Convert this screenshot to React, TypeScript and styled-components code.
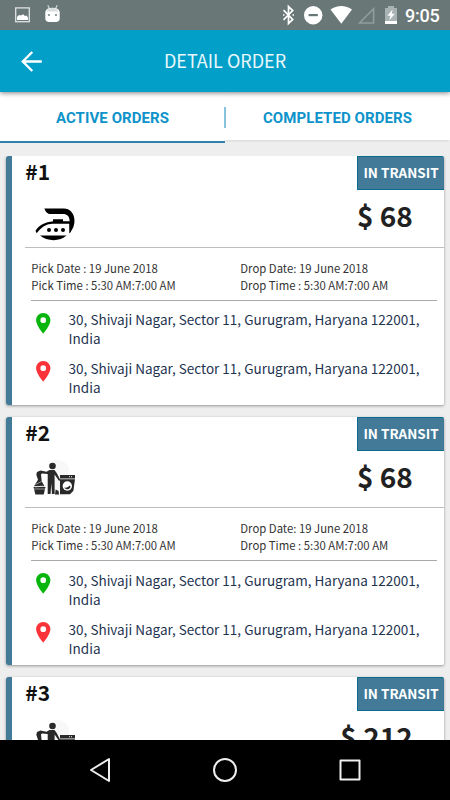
import React from "react";
import styled, { createGlobalStyle } from "styled-components";

const Global = createGlobalStyle`
  * { box-sizing: border-box; }
  body { margin: 0; background: #eeeeee; }
`;

const Screen = styled.div`
  width: 450px;
  height: 800px;
  display: flex;
  flex-direction: column;
  overflow: hidden;
  background: #eeeeee;
  color: #212121;
  font-family: "Noto Sans CJK SC", "Noto Sans", sans-serif;
`;

const StatusBar = styled.div`
  height: 30px;
  flex: none;
  display: flex;
  justify-content: space-between;
  background: #697777;
`;

const Toolbar = styled.header`
  height: 62px;
  flex: none;
  display: grid;
  grid-template-columns: 63px 1fr 63px;
  align-items: center;
  background: #029fc8;
  box-shadow: 0 1px 5px rgba(0, 0, 0, 0.5);
  clip-path: inset(0 0 -10px 0);
  z-index: 2;
`;

const BackIcon = styled.svg`
  margin-left: 19px;
  width: 25px;
  height: 25px;
  display: block;
`;

const Title = styled.h1`
  margin: 0;
  padding-bottom: 2px;
  text-align: center;
  color: #e9f8fc;
  font-weight: 400;
  font-size: 18px;
  line-height: 28px;
`;

const Tabs = styled.nav`
  position: relative;
  height: 51px;
  flex: none;
  display: grid;
  grid-template-columns: 225px 225px;
  margin-bottom: 13px;
`;

const Tab = styled.div<{ $active?: boolean }>`
  height: ${(p) => (p.$active ? 51 : 48)}px;
  display: flex;
  align-items: center;
  justify-content: center;
  background: #fff;
  color: #0e93ca;
  font: 700 15px/20px Roboto, sans-serif;
  letter-spacing: 0.08px;
  padding-top: ${(p) => (p.$active ? 2 : 3)}px;
  border-bottom: ${(p) => (p.$active ? "2px solid #2f80ac" : "0")};
  box-shadow: ${(p) => (p.$active ? "none" : "0 2px 2px -1px rgba(0,0,0,.1)")};
`;

const TabDivider = styled.span`
  position: absolute;
  left: 224px;
  top: 15px;
  width: 2px;
  height: 21px;
  background: #86c3df;
`;

const Orders = styled.main`
  flex: 1;
  min-height: 0;
  overflow: hidden;
  padding: 0 6px;
  display: flex;
  flex-direction: column;
  gap: 12.2px;
`;

const Card = styled.article`
  height: 248.5px;
  flex: none;
  background: linear-gradient(90deg, #427a97 6px, #fff 6px);
  padding-left: 6px;
  border-radius: 2.5px;
  box-shadow: 0 1px 3px rgba(0, 0, 0, 0.38);
`;

const CardHead = styled.div`
  height: 34px;
  display: flex;
  justify-content: space-between;
  padding-left: 13.3px;
`;

const OrderNumber = styled.h2`
  margin: 0;
  font-size: 21px;
  line-height: 31px;
  font-weight: 700;
  color: #111;
`;

const Badge = styled.div`
  width: 87px;
  padding-bottom: 2px;
  display: flex;
  align-items: center;
  justify-content: center;
  color: #fff;
  background: #427a97;
  border: 1px solid #0b6c92;
  border-width: 1px 0 1px 1px;
  border-top-right-radius: 2px;
  font-size: 13.5px;
  line-height: 20px;
  font-weight: 700;
`;

const Summary = styled.div`
  height: 57.5px;
  margin-left: 13px;
  display: flex;
  justify-content: space-between;
  border-bottom: 1px solid #bdbdbd;
`;

const ServiceIcon = styled.svg`
  width: 60px;
  height: 45px;
  display: block;
  margin-top: 10px;
  overflow: visible;
`;

const Price = styled.div`
  padding: 5px 31.2px 0 0;
  font-size: 28px;
  line-height: 40px;
  font-weight: 700;
`;

const Schedule = styled.div`
  height: 53px;
  margin: 0 7px 0 19px;
  padding: 12.3px 0 0 0.3px;
  display: grid;
  grid-template-columns: 209px 1fr;
  font-size: 11.35px;
  line-height: 17px;
  color: #333;
  border-bottom: 1px solid #aaa;
  white-space: nowrap;
`;

const Stops = styled.div`
  padding: 9.5px 6px 0 19px;
  display: flex;
  flex-direction: column;
  gap: 10px;
`;

const Stop = styled.div`
  display: grid;
  grid-template-columns: 37.6px 1fr;
  color: #1e3350;
  font-size: 13.52px;
  line-height: 19.4px;
`;

const PinSvg = styled.svg`
  width: 24.5px;
  height: 24.5px;
  display: block;
  margin-top: 0.5px;
`;

const NavBar = styled.footer`
  height: 60px;
  flex: none;
  background: #000;
  display: flex;
  justify-content: center;
  z-index: 2;
`;

const Block = styled.svg`
  display: block;
`;

const NotificationIcons = () => (
  <Block width="70" height="30" viewBox="0 0 70 30">
    <rect x="15.7" y="7.9" width="13.6" height="13.8" fill="none" stroke="#dfe3e3" strokeWidth="1.3" />
    <path d="M17 20v-3l2-2 2 .5 2-1.3 2 1.8 1.5-.5 1.5 2V20z" fill="#fff" />
    <path d="M47.8 5.2l1.7 3.6M57.2 5.2l-1.7 3.6" stroke="#d8dddd" strokeWidth="1.1" />
    <path d="M45.3 12c.7-3 3-4.2 7.2-4.2s6.500 1.200 7.200 4.200v6.500c0 2-1.300 3.600-4 3.600h-6.500c-2.600 0-3.900-1.600-3.900-3.600z" fill="#fff" />
    <path d="M46.500 11.500c.9-2.500 2.800-3.500 6-3.500s5.100 1 6 3.500z" fill="#d9dddd" />
    <circle cx="49" cy="15" r="1.100" fill="#7b8787" />
    <circle cx="56" cy="15" r="1.100" fill="#7b8787" />
  </Block>
);

const SystemStatus = styled.div`
  display: flex;
  color: #fff;
  font: 500 18px/30px Roboto, sans-serif;
`;

const Clock = styled.span`
  width: 45px;
  padding-top: 1px;
  letter-spacing: -0.2px;
`;

const SystemIcons = () => (
  <Block width="125" height="30" viewBox="280 0 125 30">
    <path d="M283.500 10.200l9.200 9.200-4.200 4V6.600l4.200 4-9.200 9.200" fill="none" stroke="#fff" strokeWidth="1.700" />
    <path d="M283 15h1.500M292.500 15h1.500" stroke="#fff" strokeWidth="1.700" />
    <circle cx="313.200" cy="15.200" r="9.200" fill="#fff" />
    <rect x="308.600" y="14" width="9.200" height="2.200" fill="#697777" />
    <path d="M330.500 9.600c6.300-4.800 15.200-4.800 21.500 0L341.300 23.800z" fill="#fff" />
    <path d="M359.500 23L373.600 8.600V23z" fill="none" stroke="#929d9d" strokeWidth="1.600" />
    <path d="M385 8h3V6h6v2h3v13h-12z" fill="#aab3b3" />
    <path d="M385 21h12v3h-12z" fill="#fff" />
    <path d="M392.500 9.500l-5 6.200h3l-1.200 4.500 5.500-6.500h-3.100z" fill="#fff" />
  </Block>
);

const IronIcon = () => (
  <ServiceIcon viewBox="0 0 60 45">
    <path d="M19.300 8.500H39c5.500 0 10.500 4.300 10.500 12.300 0 4-1.500 8.500-4.500 11.600l-.4-11.200c0-5-2.500-7.200-6.600-7.200H24c-2.500-1-4-3.500-4.700-5.500z" fill="#000" />
    <path d="M10.500 30.700c3.700-5.500 9-8.700 18-9.500H46V23.700H28c-8 .3-12 4-16.300 9.500z" fill="#000" />
    <path d="M28 19.200h10v3H28zM44.300 22h3.300l-1.800 10-1.500 1.500z" fill="#000" />
    <circle cx="24" cy="30" r="2" />
    <circle cx="31" cy="30" r="2" />
    <circle cx="38" cy="30" r="2" />
    <path d="M15 35.500h26.500c-6.200 6.200-19.500 6.200-26.500 0z" />
  </ServiceIcon>
);

const LaundryIcon = () => (
  <ServiceIcon viewBox="0 6 60 45">
    <path d="M28 6C34 2 43 9 44 13V37c-5 5-13 6-18 2z" fill="#f8f8f8" />
    <g fill="#292929">
      <circle cx="27.500" cy="11" r="3.300" />
      <path d="M12 17l3.500-1.500 6 1.200 3-1.700h5l2.200 3 3.600 7-1.200 1-4.500-6.500v19.500h-2.600l-.7-11-.7 11h-2.900V19l-5.500-.6-1.200.8.700 7 2.800 5H9l4-6.500-1.700-5z" />
      <path d="M8.500 32h12l-1.800 7.500H10.400z" />
      <path d="M35 20h15v3.500H35zM35 24.300h15l-1.600 11.500L45 39.300H35z" />
      <path d="M30 39.500l.6-5 3 1.500.4 3.500z" />
    </g>
    <path d="M10.500 29.500l6-3M10 32l8-1M8 34h13" stroke="#fff" strokeWidth=".5" fill="none" />
    <circle cx="42.300" cy="31" r="4.700" fill="#fff" />
    <path d="M39 32.300c2.200 1.300 4-.2 6-1.700 2 2.700-3.300 6-6 1.700z" fill="#292929" />
    <path d="M44 21.700h4" stroke="#fff" strokeWidth=".9" strokeDasharray="1 1" />
  </ServiceIcon>
);

const Pin = ({ color }: { color: string }) => (
  <PinSvg viewBox="0 0 24 24">
    <path
      fill={color}
      d="M12 2C8.130 2 5 5.130 5 9c0 5.250 7 13 7 13s7-7.750 7-13c0-3.870-3.130-7-7-7zm0 9.800a2.800 2.800 0 1 1 0-5.600 2.800 2.800 0 0 1 0 5.600z"
    />
  </PinSvg>
);

const address = "30, Shivaji Nagar, Sector 11, Gurugram, Haryana 122001, India";

const orders = [
  { id: 1, price: 68, icon: <IronIcon /> },
  { id: 2, price: 68, icon: <LaundryIcon /> },
  { id: 3, price: 212, icon: <LaundryIcon /> },
];

export default function App() {
  return (
    <>
      <Global />
      <Screen>
        <StatusBar>
          <NotificationIcons />
          <SystemStatus>
            <SystemIcons />
            <Clock>9:05</Clock>
          </SystemStatus>
        </StatusBar>
        <Toolbar>
          <BackIcon viewBox="0 0 25 25" fill="none" stroke="#fff" strokeWidth="2.400">
            <path d="M22.800 12.500H4M13.300 3L3.800 12.500l9.500 9.500" />
          </BackIcon>
          <Title>DETAIL ORDER</Title>
        </Toolbar>
        <Tabs>
          <Tab $active>ACTIVE ORDERS</Tab>
          <Tab>COMPLETED ORDERS</Tab>
          <TabDivider />
        </Tabs>
        <Orders>
          {orders.map((o) => (
            <Card key={o.id}>
              <CardHead>
                <OrderNumber>#{o.id}</OrderNumber>
                <Badge>IN TRANSIT</Badge>
              </CardHead>
              <Summary>
                {o.icon}
                <Price>$ {o.price}</Price>
              </Summary>
              <Schedule>
                <div>
                  Pick Date : 19 June 2018
                  <br />
                  Pick Time : 5:30 AM:7:00 AM
                </div>
                <div>
                  Drop Date: 19 June 2018
                  <br />
                  Drop Time : 5:30 AM:7:00 AM
                </div>
              </Schedule>
              <Stops>
                <Stop>
                  <Pin color="#08b50d" />
                  <span>{address}</span>
                </Stop>
                <Stop>
                  <Pin color="#fb3338" />
                  <span>{address}</span>
                </Stop>
              </Stops>
            </Card>
          ))}
        </Orders>
        <NavBar>
          <Block width="450" height="60" viewBox="0 0 450 60" fill="none" stroke="#eee" strokeWidth="2" strokeLinejoin="round">
            <path d="M91 30l18-11v22z" />
            <circle cx="225" cy="30" r="11" />
            <rect x="340.500" y="20.500" width="19" height="19" />
          </Block>
        </NavBar>
      </Screen>
    </>
  );
}
